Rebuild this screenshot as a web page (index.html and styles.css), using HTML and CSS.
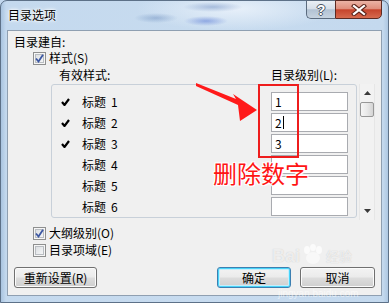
FILE: index.html
```html
<!DOCTYPE html>
<html lang="zh-CN">
<head>
<meta charset="utf-8">
<title>目录选项</title>
<link rel="stylesheet" href="styles.css">
</head>
<body>
<div class="window">
  <div class="titlebar">
    <span class="title">目录选项</span>
    <div class="caption">
      <div class="cap-help">?</div>
      <div class="cap-close">
        <svg width="16" height="12" viewBox="0 0 16 12">
          <path d="M3 2 L13 10 M13 2 L3 10" stroke="#5a2218" stroke-width="4.2" stroke-linecap="square" fill="none"/>
          <path d="M3 2 L13 10 M13 2 L3 10" stroke="#ffffff" stroke-width="2.2" stroke-linecap="square" fill="none"/>
        </svg>
      </div>
    </div>
  </div>

  <div class="client">
    <div class="top-label">目录建自:</div>

    <div class="cb-row r1">
      <span class="cbox checked"><svg width="9" height="9" viewBox="0 0 9 9"><path d="M1 4.5 L3.5 7.5 L8 0.8" stroke="#3d58a3" stroke-width="1.8" fill="none"/></svg></span>
      <span>样式(S)</span>
    </div>

    <div class="heads">
      <span class="head-a">有效样式:</span>
      <span>目录级别(L):</span>
    </div>

    <div class="list-wrap">
      <div class="listbox">
        <div class="row">
          <span class="mark"><svg width="9" height="8" viewBox="0 0 9 8"><path d="M1 4 L3.5 7 L8 1" stroke="#000" stroke-width="2.2" fill="none"/></svg></span>
          <span class="name">标题<span class="num">1</span></span>
          <span class="field">1</span>
        </div>
        <div class="row">
          <span class="mark"><svg width="9" height="8" viewBox="0 0 9 8"><path d="M1 4 L3.5 7 L8 1" stroke="#000" stroke-width="2.2" fill="none"/></svg></span>
          <span class="name">标题<span class="num">2</span></span>
          <span class="field">2<span class="caret"></span></span>
        </div>
        <div class="row">
          <span class="mark"><svg width="9" height="8" viewBox="0 0 9 8"><path d="M1 4 L3.5 7 L8 1" stroke="#000" stroke-width="2.2" fill="none"/></svg></span>
          <span class="name">标题<span class="num">3</span></span>
          <span class="field">3</span>
        </div>
        <div class="row">
          <span class="mark"></span>
          <span class="name">标题<span class="num">4</span></span>
          <span class="field"></span>
        </div>
        <div class="row">
          <span class="mark"></span>
          <span class="name">标题<span class="num">5</span></span>
          <span class="field"></span>
        </div>
        <div class="row">
          <span class="mark"></span>
          <span class="name">标题<span class="num">6</span></span>
          <span class="field"></span>
        </div>
      </div>
      <div class="scrollbar">
        <svg class="arr-up" width="7" height="4" viewBox="0 0 7 4"><path d="M0 4 L3.5 0 L7 4 Z" fill="#3a3a3a"/></svg>
        <div class="thumb"></div>
        <svg class="arr-down" width="7" height="4" viewBox="0 0 7 4"><path d="M0 0 L7 0 L3.5 4 Z" fill="#3a3a3a"/></svg>
      </div>
    </div>

    <div class="cb-row r2">
      <span class="cbox checked"><svg width="9" height="9" viewBox="0 0 9 9"><path d="M1 4.5 L3.5 7.5 L8 0.8" stroke="#3d58a3" stroke-width="1.8" fill="none"/></svg></span>
      <span>大纲级别(O)</span>
    </div>
    <div class="cb-row r3">
      <span class="cbox"></span>
      <span>目录项域(E)</span>
    </div>

    <div class="buttons">
      <button class="btn reset">重新设置(R)</button>
      <button class="btn ok">确定</button>
      <button class="btn cancel">取消</button>
    </div>
  </div>

  <svg class="arrow" width="389" height="303" viewBox="0 0 389 303">
    <polygon points="196,83 236,99 233,94 257,110 240,121 238,105 196,86" fill="#ff1a1a"/>
  </svg>
  <div class="red-box"></div>
  <div class="note">删除数字</div>
  <div class="watermark">
    <div class="wm-top">
      <span class="wm-bai">Bai</span>
      <svg class="wm-paw" width="24" height="22" viewBox="0 0 24 22">
        <ellipse cx="6" cy="6" rx="3" ry="4" fill="rgba(255,255,255,0.7)"/>
        <ellipse cx="12" cy="3.5" rx="3" ry="3.5" fill="rgba(255,255,255,0.7)"/>
        <ellipse cx="18" cy="6" rx="3" ry="4" fill="rgba(255,255,255,0.7)"/>
        <ellipse cx="12" cy="14" rx="7" ry="6" fill="rgba(255,255,255,0.55)"/>
      </svg>
      <span class="wm-jy">经验</span>
    </div>
    <div class="wm-url">jingyan.baidu.com</div>
  </div>
</div>
</body>
</html>
```

FILE: styles.css
```css
* { box-sizing: border-box; }
html, body { margin: 0; padding: 0; }
body {
  width: 389px;
  height: 303px;
  overflow: hidden;
  font-family: "Noto Sans CJK SC", "Liberation Sans", sans-serif;
  font-size: 12px;
  color: #000;
  background: #c3d8ee;
}
.window {
  position: relative;
  width: 389px;
  height: 303px;
  border: 1px solid #5d7188;
  border-radius: 7px 7px 0 0;
  display: flex;
  flex-direction: column;
  background:
    radial-gradient(ellipse 22px 5px at 155px 17px, rgba(70,110,170,0.35), transparent),
    radial-gradient(ellipse 30px 5px at 212px 6px, rgba(60,100,170,0.35), transparent),
    radial-gradient(ellipse 22px 5px at 205px 20px, rgba(40,80,200,0.40), transparent),
    radial-gradient(ellipse 100px 22px at 235px 8px, rgba(236,243,251,0.85), transparent),
    linear-gradient(90deg, #a9c4e0 0, #c4d9ee 5px, #c7dbef 200px, #c4d9ee 382px, #a9c4e0 388px);
}
.titlebar {
  height: 29px;
  display: flex;
  align-items: flex-start;
}
.title {
  padding: 7px 0 0 7px;
  line-height: 14px;
  text-shadow: 0 0 5px #fff, 0 0 3px #fff, 0 0 2px #fff;
}
.caption {
  margin-left: auto;
  margin-right: 6px;
  margin-top: -1px;
  display: flex;
}
.cap-help {
  width: 29px;
  height: 19px;
  border: 1px solid #5b6b7e;
  border-right: none;
  border-radius: 0 0 0 5px;
  background: linear-gradient(#e9eff5 0%, #d6dfe9 45%, #b2c2d3 52%, #c6d3e0 100%);
  display: flex;
  align-items: center;
  justify-content: center;
  font-family: "Liberation Sans", sans-serif;
  font-weight: bold;
  font-size: 14px;
  line-height: 14px;
  color: #fff;
  text-shadow: -1px 0 #4a5563, 1px 0 #4a5563, 0 -1px #4a5563, 0 1px #4a5563;
}
.cap-close {
  width: 47px;
  height: 19px;
  border: 1px solid #5c2a22;
  border-radius: 0 0 5px 0;
  background: linear-gradient(#ebb3a5 0%, #df8f7d 45%, #c6442c 52%, #d66a4e 100%);
  display: flex;
  align-items: center;
  justify-content: center;
}

.client {
  margin: 0 6px;
  height: 266px;
  border: 1px solid #8f9fb1;
  background: #f0f0f0;
  padding-top: 4px;
  display: flex;
  flex-direction: column;
}
.top-label {
  margin-left: 6px;
  line-height: 14px;
}
.cb-row {
  display: flex;
  align-items: center;
  gap: 3px;
  margin-left: 25px;
  height: 14px;
  line-height: 14px;
}
.cb-row.r1 { margin-top: 2px; }
.cb-row.r2 { margin-top: 6px; }
.cb-row.r3 { margin-top: 3px; }
.cbox {
  width: 13px;
  height: 13px;
  border: 1px solid #8e8f8f;
  background: linear-gradient(135deg, #d6d9dd 0%, #eceef0 60%, #fbfbfb 100%);
  box-shadow: inset 0 0 0 1px #f6f6f6, inset 0 0 0 2px #b9bdc2;
  display: flex;
  align-items: center;
  justify-content: center;
}
.heads {
  display: flex;
  margin-top: 3px;
  margin-left: 51px;
  line-height: 14px;
}
.head-a { width: 212px; }

.list-wrap {
  display: flex;
  margin-top: 2px;
  margin-left: 43px;
  gap: 2px;
  height: 136px;
}
.listbox {
  width: 306px;
  height: 134px;
  border: 1px solid #c8d0d9;
  border-radius: 3px;
  padding-top: 7px;
  display: flex;
  flex-direction: column;
  gap: 2px;
  overflow: hidden;
}
.row {
  display: grid;
  grid-template-columns: 30px 189px 77px;
  height: 19px;
  align-items: center;
  line-height: 14px;
}
.mark {
  padding-left: 9px;
  display: flex;
  align-items: center;
}
.num { margin-left: 5px; }
.field {
  height: 19px;
  border: 1px solid #a9abb0;
  background: #fff;
  padding-left: 3px;
  line-height: 17px;
  display: flex;
  align-items: center;
}
.caret {
  display: inline-block;
  width: 1px;
  height: 13px;
  background: #000;
  margin-left: 1px;
}
.scrollbar {
  width: 16px;
  height: 136px;
  border-left: 1px solid #e6e6e6;
  border-right: 1px solid #e6e6e6;
  background: #f2f2f2;
  display: flex;
  flex-direction: column;
  align-items: center;
}
.arr-up { margin-top: 7px; }
.thumb {
  margin-top: 7px;
  width: 14px;
  height: 15px;
  border: 1px solid #979797;
  border-radius: 2px;
  background: linear-gradient(90deg, #f6f6f6 0%, #e9e9e9 50%, #d4d4d4 100%);
}
.arr-down { margin-top: auto; margin-bottom: 7px; }

.buttons {
  display: flex;
  margin-top: 10px;
  padding: 0 6px;
  height: 21px;
}
.btn {
  height: 21px;
  border: 1px solid #707070;
  border-radius: 3px;
  background: linear-gradient(#f3f3f3 0%, #ebebeb 48%, #dddddd 52%, #cfcfcf 100%);
  box-shadow: inset 0 0 0 1px #fbfbfb;
  font-family: "Noto Sans CJK SC", "Liberation Sans", sans-serif;
  font-size: 12px;
  line-height: 14px;
  color: #000;
  padding: 0;
}
.reset { width: 83px; }
.ok {
  width: 74px;
  margin-left: auto;
  border-color: #3c7fb1;
  box-shadow: inset 0 0 0 1px #49d4f9, inset 0 0 0 2px #c5eefc;
}
.cancel { width: 75px; margin-left: 9px; }

.arrow {
  position: absolute;
  left: -1px;
  top: -1px;
  pointer-events: none;
}
.red-box {
  position: absolute;
  left: 257px;
  top: 83px;
  width: 41px;
  height: 74px;
  border: 2px solid #ee1c1c;
}
.note {
  position: absolute;
  left: 212px;
  top: 160px;
  font-size: 24px;
  line-height: 24px;
  color: #ff1414;
  text-shadow: 1px 1px 0 #fff, -1px -1px 0 #fff, 1px -1px 0 #fff, -1px 1px 0 #fff, 0 0 3px #fff;
}
.watermark {
  position: absolute;
  left: 271px;
  top: 241px;
  white-space: nowrap;
  pointer-events: none;
}
.wm-top {
  display: flex;
  align-items: flex-end;
  height: 24px;
}
.wm-bai {
  font-family: "Liberation Sans", sans-serif;
  font-weight: bold;
  font-size: 18px;
  line-height: 20px;
  color: rgba(255,255,255,0.7);
  text-shadow: 0 0 1px rgba(140,140,140,0.45);
}
.wm-paw { margin-left: 1px; }
.wm-jy {
  font-size: 13px;
  line-height: 14px;
  color: rgba(255,255,255,0.7);
  text-shadow: 0 0 1px rgba(140,140,140,0.45);
  margin-left: 1px;
  margin-bottom: 3px;
}
.wm-url {
  font-family: "Liberation Sans", sans-serif;
  font-size: 10px;
  line-height: 10px;
  margin-top: 23px;
  margin-left: 6px;
  color: rgba(255,255,255,0.55);
}
```
